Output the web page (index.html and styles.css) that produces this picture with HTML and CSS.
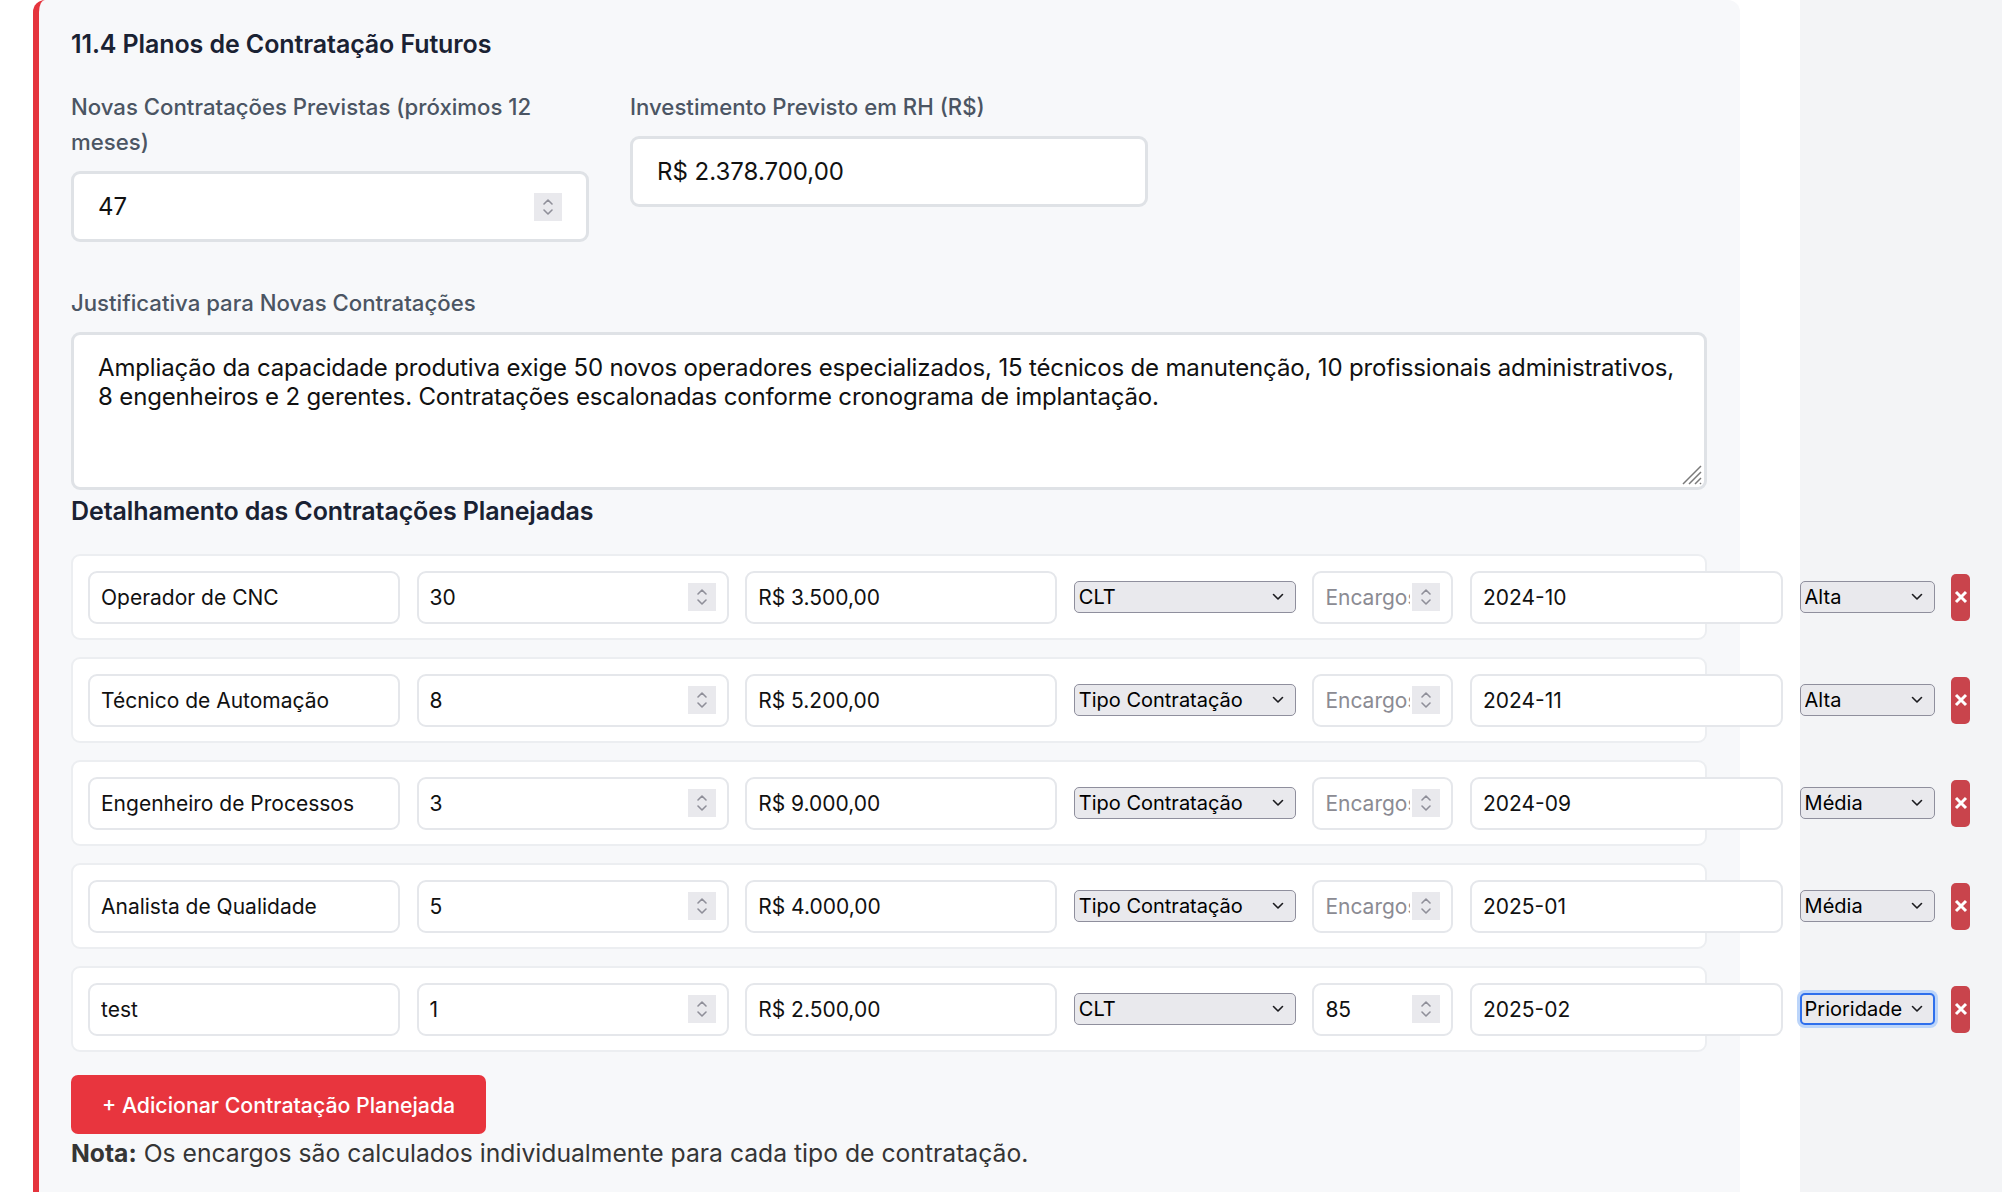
FILE: index.html
```html
<!DOCTYPE html>
<html lang="pt-BR">
<head>
<meta charset="utf-8">
<title>Planos de Contratação Futuros</title>
<link rel="stylesheet" href="styles.css">
</head>
<body>
<div class="page">
  <section class="card">
    <h3 class="section-title">11.4 Planos de Contratação Futuros</h3>

    <div class="grid3">
      <div class="field">
        <label class="label" for="novas">Novas Contratações Previstas (próximos 12 meses)</label>
        <div class="num-wrap">
          <input id="novas" class="input-lg num" type="number" value="47">
          <span class="spinner spinner-lg"><svg width="28" height="28" viewBox="0 0 28 28"><polyline points="10,11 14,7 18,11"/><polyline points="10,17 14,21 18,17"/></svg></span>
        </div>
      </div>
      <div class="field">
        <label class="label" for="invest">Investimento Previsto em RH (R$)</label>
        <input id="invest" class="input-lg" type="text" value="R$ 2.378.700,00">
      </div>
    </div>

    <div class="field">
      <label class="label" for="just">Justificativa para Novas Contratações</label>
      <div class="ta-wrap">
        <textarea id="just" class="input-lg textarea">Ampliação da capacidade produtiva exige 50 novos operadores especializados, 15 técnicos de manutenção, 10 profissionais administrativos, 8 engenheiros e 2 gerentes. Contratações escalonadas conforme cronograma de implantação.</textarea>
        <svg class="grip" width="22" height="22" viewBox="0 0 22 22"><path d="M21 3 L3 21 M21 9 L9 21 M21 15 L15 21 M21 20 L20 21"/></svg>
      </div>
    </div>

    <h4 class="sub-title">Detalhamento das Contratações Planejadas</h4>

    <div class="rows">
      <div class="hire-row">
        <input class="row-input w-312" type="text" value="Operador de CNC">
        <div class="num-wrap w-312"><input class="row-input num full" type="number" value="30"><span class="spinner"><svg width="28" height="28" viewBox="0 0 28 28"><polyline points="10,11 14,7 18,11"/><polyline points="10,17 14,21 18,17"/></svg></span></div>
        <input class="row-input w-312" type="text" value="R$ 3.500,00">
        <div class="select-wrap w-222"><select class="sel"><option>CLT</option></select><svg class="chev" width="12" height="8" viewBox="0 0 12 8"><polyline points="1.5,1.5 6,6 10.5,1.5"/></svg></div>
        <div class="num-wrap w-141"><input class="row-input num full" type="number" placeholder="Encargos"><span class="spinner"><svg width="28" height="28" viewBox="0 0 28 28"><polyline points="10,11 14,7 18,11"/><polyline points="10,17 14,21 18,17"/></svg></span></div>
        <input class="row-input w-313" type="text" value="2024-10">
        <div class="select-wrap w-135"><select class="sel"><option>Alta</option></select><svg class="chev" width="12" height="8" viewBox="0 0 12 8"><polyline points="1.5,1.5 6,6 10.5,1.5"/></svg></div>
        <button class="del-btn" type="button" aria-label="Remover"><svg width="14" height="14" viewBox="0 0 14 14"><path d="M2 2 L12 12 M12 2 L2 12"/></svg></button>
      </div>

      <div class="hire-row">
        <input class="row-input w-312" type="text" value="Técnico de Automação">
        <div class="num-wrap w-312"><input class="row-input num full" type="number" value="8"><span class="spinner"><svg width="28" height="28" viewBox="0 0 28 28"><polyline points="10,11 14,7 18,11"/><polyline points="10,17 14,21 18,17"/></svg></span></div>
        <input class="row-input w-312" type="text" value="R$ 5.200,00">
        <div class="select-wrap w-222"><select class="sel"><option>Tipo Contratação</option></select><svg class="chev" width="12" height="8" viewBox="0 0 12 8"><polyline points="1.5,1.5 6,6 10.5,1.5"/></svg></div>
        <div class="num-wrap w-141"><input class="row-input num full" type="number" placeholder="Encargos"><span class="spinner"><svg width="28" height="28" viewBox="0 0 28 28"><polyline points="10,11 14,7 18,11"/><polyline points="10,17 14,21 18,17"/></svg></span></div>
        <input class="row-input w-313" type="text" value="2024-11">
        <div class="select-wrap w-135"><select class="sel"><option>Alta</option></select><svg class="chev" width="12" height="8" viewBox="0 0 12 8"><polyline points="1.5,1.5 6,6 10.5,1.5"/></svg></div>
        <button class="del-btn" type="button" aria-label="Remover"><svg width="14" height="14" viewBox="0 0 14 14"><path d="M2 2 L12 12 M12 2 L2 12"/></svg></button>
      </div>

      <div class="hire-row">
        <input class="row-input w-312" type="text" value="Engenheiro de Processos">
        <div class="num-wrap w-312"><input class="row-input num full" type="number" value="3"><span class="spinner"><svg width="28" height="28" viewBox="0 0 28 28"><polyline points="10,11 14,7 18,11"/><polyline points="10,17 14,21 18,17"/></svg></span></div>
        <input class="row-input w-312" type="text" value="R$ 9.000,00">
        <div class="select-wrap w-222"><select class="sel"><option>Tipo Contratação</option></select><svg class="chev" width="12" height="8" viewBox="0 0 12 8"><polyline points="1.5,1.5 6,6 10.5,1.5"/></svg></div>
        <div class="num-wrap w-141"><input class="row-input num full" type="number" placeholder="Encargos"><span class="spinner"><svg width="28" height="28" viewBox="0 0 28 28"><polyline points="10,11 14,7 18,11"/><polyline points="10,17 14,21 18,17"/></svg></span></div>
        <input class="row-input w-313" type="text" value="2024-09">
        <div class="select-wrap w-135"><select class="sel"><option>Média</option></select><svg class="chev" width="12" height="8" viewBox="0 0 12 8"><polyline points="1.5,1.5 6,6 10.5,1.5"/></svg></div>
        <button class="del-btn" type="button" aria-label="Remover"><svg width="14" height="14" viewBox="0 0 14 14"><path d="M2 2 L12 12 M12 2 L2 12"/></svg></button>
      </div>

      <div class="hire-row">
        <input class="row-input w-312" type="text" value="Analista de Qualidade">
        <div class="num-wrap w-312"><input class="row-input num full" type="number" value="5"><span class="spinner"><svg width="28" height="28" viewBox="0 0 28 28"><polyline points="10,11 14,7 18,11"/><polyline points="10,17 14,21 18,17"/></svg></span></div>
        <input class="row-input w-312" type="text" value="R$ 4.000,00">
        <div class="select-wrap w-222"><select class="sel"><option>Tipo Contratação</option></select><svg class="chev" width="12" height="8" viewBox="0 0 12 8"><polyline points="1.5,1.5 6,6 10.5,1.5"/></svg></div>
        <div class="num-wrap w-141"><input class="row-input num full" type="number" placeholder="Encargos"><span class="spinner"><svg width="28" height="28" viewBox="0 0 28 28"><polyline points="10,11 14,7 18,11"/><polyline points="10,17 14,21 18,17"/></svg></span></div>
        <input class="row-input w-313" type="text" value="2025-01">
        <div class="select-wrap w-135"><select class="sel"><option>Média</option></select><svg class="chev" width="12" height="8" viewBox="0 0 12 8"><polyline points="1.5,1.5 6,6 10.5,1.5"/></svg></div>
        <button class="del-btn" type="button" aria-label="Remover"><svg width="14" height="14" viewBox="0 0 14 14"><path d="M2 2 L12 12 M12 2 L2 12"/></svg></button>
      </div>

      <div class="hire-row">
        <input class="row-input w-312" type="text" value="test">
        <div class="num-wrap w-312"><input class="row-input num full" type="number" value="1"><span class="spinner"><svg width="28" height="28" viewBox="0 0 28 28"><polyline points="10,11 14,7 18,11"/><polyline points="10,17 14,21 18,17"/></svg></span></div>
        <input class="row-input w-312" type="text" value="R$ 2.500,00">
        <div class="select-wrap w-222"><select class="sel"><option>CLT</option></select><svg class="chev" width="12" height="8" viewBox="0 0 12 8"><polyline points="1.5,1.5 6,6 10.5,1.5"/></svg></div>
        <div class="num-wrap w-141"><input class="row-input num full" type="number" value="85"><span class="spinner"><svg width="28" height="28" viewBox="0 0 28 28"><polyline points="10,11 14,7 18,11"/><polyline points="10,17 14,21 18,17"/></svg></span></div>
        <input class="row-input w-313" type="text" value="2025-02">
        <div class="select-wrap w-135"><select class="sel sel-focus"><option>Prioridade</option></select><svg class="chev" width="12" height="8" viewBox="0 0 12 8"><polyline points="1.5,1.5 6,6 10.5,1.5"/></svg></div>
        <button class="del-btn" type="button" aria-label="Remover"><svg width="14" height="14" viewBox="0 0 14 14"><path d="M2 2 L12 12 M12 2 L2 12"/></svg></button>
      </div>
    </div>

    <button class="add-btn" type="button">+ Adicionar Contratação Planejada</button>
    <p class="note"><strong>Nota:</strong> Os encargos são calculados individualmente para cada tipo de contratação.</p>
  </section>
</div>
</body>
</html>
```

FILE: styles.css
```css
* { box-sizing: border-box; }

body {
  margin: 0;
  background: #f3f4f6;
  font-family: Inter, "Noto Sans", sans-serif;
}

.page {
  width: 1800px;
  min-height: 1192px;
  background: #ffffff;
  padding-left: 33px;
}

.card {
  width: 1707px;
  background: #f7f8fa;
  border-left: 6px solid #e5343d;
  border-radius: 12px;
  padding: 24px 33px 60px 32px;
}

.section-title,
.sub-title {
  margin: 0 0 25px;
  font-size: 25px;
  line-height: 40px;
  font-weight: 600;
  letter-spacing: -0.1px;
  color: #1a2233;
}

.sub-title {
  margin: 1px 0 23px;
}

.grid3 {
  display: grid;
  grid-template-columns: repeat(3, 1fr);
  column-gap: 41px;
  margin-bottom: 43px;
}

.label {
  display: block;
  font-size: 22.2px;
  line-height: 35px;
  font-weight: 500;
  color: #4b5563;
  margin-bottom: 12px;
}

.input-lg {
  display: block;
  width: 100%;
  height: 71px;
  border: 3px solid #dfe2e6;
  border-radius: 9px;
  padding: 0 24px;
  font-family: Inter, "Noto Sans", sans-serif;
  font-size: 24px;
  color: #111111;
  background: #ffffff;
  outline: none;
}

.input-lg.num {
  padding-right: 55px;
}

.ta-wrap {
  position: relative;
}

.textarea {
  height: 158px;
  padding: 18px 24px;
  line-height: normal;
  letter-spacing: -0.15px;
  resize: none;
}

.grip {
  position: absolute;
  right: 5px;
  bottom: 5px;
  fill: none;
  stroke: #7a7a7a;
  stroke-width: 1.5;
  pointer-events: none;
}

.num-wrap,
.select-wrap {
  position: relative;
  flex-shrink: 0;
}

input[type=number] { -moz-appearance: textfield; }
input[type=number]::-webkit-inner-spin-button,
input[type=number]::-webkit-outer-spin-button {
  -webkit-appearance: none;
  margin: 0;
}

.spinner {
  position: absolute;
  top: 50%;
  right: 13px;
  width: 28px;
  height: 28px;
  margin-top: -14px;
  background: #e9e9ed;
  pointer-events: none;
}

.spinner-lg {
  right: 27px;
}

.spinner svg {
  display: block;
  fill: none;
  stroke: #8f8f99;
  stroke-width: 1.6;
  stroke-linecap: round;
  stroke-linejoin: round;
}

.rows {
  display: flex;
  flex-direction: column;
  gap: 17px;
  margin-bottom: 23px;
}

.hire-row {
  display: flex;
  align-items: center;
  gap: 16.6px;
  background: #ffffff;
  border: 2px solid #eceef1;
  border-radius: 9px;
  padding: 14.5px 15px;
}

.row-input {
  flex-shrink: 0;
  height: 53px;
  border: 2px solid #e5e7eb;
  border-radius: 9px;
  padding: 0 11px;
  font-family: Inter, "Noto Sans", sans-serif;
  font-size: 21px;
  color: #111111;
  background: #ffffff;
  outline: none;
}

.row-input.num {
  padding-right: 41px;
}

.row-input::placeholder {
  color: #8b8b93;
}

.full { width: 100%; display: block; }
.w-312 { width: 312px; }
.w-313 { width: 313px; }
.w-222 { width: 222px; }
.w-141 { width: 141px; }
.w-135 { width: 135px; }

.sel {
  -webkit-appearance: none;
  appearance: none;
  display: block;
  width: 100%;
  height: 32px;
  border: 1px solid #8f8f9d;
  border-radius: 5px;
  background: #e9e9ed;
  padding: 0 28px 0 4px;
  font-family: Inter, "Noto Sans", sans-serif;
  font-size: 20px;
  color: #000000;
  outline: none;
}

.sel-focus {
  border: 2px solid #2f6fec;
  box-shadow: 0 0 0 3px #bcd5fa;
  padding-left: 3px;
}

.chev {
  position: absolute;
  right: 12px;
  top: 50%;
  margin-top: -4px;
  fill: none;
  stroke: #1b1b1f;
  stroke-width: 1.6;
  stroke-linecap: round;
  stroke-linejoin: round;
  pointer-events: none;
}

.del-btn {
  flex-shrink: 0;
  width: 19px;
  height: 47px;
  padding: 0;
  border: none;
  border-radius: 5px;
  background: #c9444c;
  display: flex;
  align-items: center;
  justify-content: center;
  overflow: visible;
}

.del-btn svg {
  flex-shrink: 0;
  fill: none;
  stroke: #ffffff;
  stroke-width: 3;
  stroke-linecap: butt;
}

.add-btn {
  display: block;
  height: 59px;
  padding: 0 31px;
  border: none;
  border-radius: 7px;
  background: #e8353e;
  color: #ffffff;
  font-family: Inter, "Noto Sans", sans-serif;
  font-size: 21.3px;
  font-weight: 500;
}

.note {
  margin: 0;
  font-size: 24.7px;
  line-height: 39px;
  color: #353535;
}

.note strong {
  font-weight: 700;
}
```
